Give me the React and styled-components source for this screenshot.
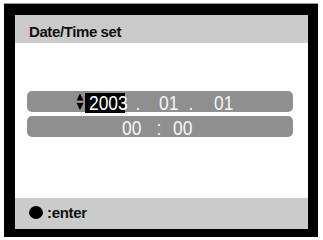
import React from "react";
import styled, { createGlobalStyle } from "styled-components";

const Global = createGlobalStyle`
  html, body { margin: 0; padding: 0; background: #ffffff; }
  body { font-family: "Liberation Sans", Arial, sans-serif; }
`;

const Page = styled.div`
  width: 323px;
  height: 240px;
  padding: 4px 0 0 4px;
  box-sizing: border-box;
`;

const Bezel = styled.div`
  width: 314px;
  height: 233px;
  box-sizing: border-box;
  background: #000;
  padding: 11px 10px 8px 11px;
  box-shadow: 0 -1px 0 #9a9a9a;
`;

const Screen = styled.div`
  width: 293px;
  height: 214px;
  background: #fff;
  display: flex;
  flex-direction: column;
`;

const Header = styled.div`
  height: 28px;
  box-sizing: border-box;
  background: #cbcbcb;
  padding: 9px 0 0 14px;
  font-weight: bold;
  font-size: 15px;
  line-height: 15px;
  letter-spacing: -0.4px;
  color: #111;
`;

const Body = styled.div`
  flex: 1;
  display: flex;
  flex-direction: column;
  gap: 4px;
  padding: 48px 15px 0 12px;
`;

const Row = styled.div`
  height: 21px;
  background: #8f8f8f;
  border-radius: 5px;
  display: flex;
  align-items: flex-start;
`;

const Field = styled.div`
  flex: none;
  width: ${(p) => p.$w}px;
  margin-left: ${(p) => p.$ml || 0}px;
  height: 21px;
  line-height: 24px;
  font-size: 21px;
  color: #f6f6f6;
  text-align: center;
  white-space: nowrap;
`;

const Selected = styled(Field)`
  background: #000;
  color: #fff;
  height: 20px;
  line-height: 20px;
  margin-top: 2px;
`;

const Glyphs = styled.span`
  display: inline-block;
  transform: scaleX(0.83);
  transform-origin: center;
`;

const Arrows = styled.svg`
  flex: none;
  margin-left: ${(p) => p.$ml}px;
  margin-top: 2px;
  display: block;
`;

const Footer = styled.div`
  height: 31px;
  box-sizing: border-box;
  background: #cbcbcb;
  display: flex;
  align-items: center;
  gap: 4px;
  padding: 0 0 3px 14px;
  font-weight: bold;
  font-size: 15px;
  line-height: 15px;
  letter-spacing: -0.3px;
  color: #111;
`;

const Dot = styled.span`
  width: 14px;
  height: 13px;
  border-radius: 50%;
  background: #000;
  display: inline-block;
`;

export default function App() {
  return (
    <>
      <Global />
      <Page>
        <Bezel>
          <Screen>
            <Header>Date/Time set</Header>
            <Body>
              <Row>
                <Arrows $ml={49} width="8" height="18" viewBox="0 0 8 18">
                  <polygon points="4,0.5 7.5,7.5 0.5,7.5" fill="#000" />
                  <polygon points="0.5,10 7.5,10 4,17" fill="#000" />
                </Arrows>
                <Selected $w={40} $ml={1}>
                  <Glyphs>2003</Glyphs>
                </Selected>
                <Field $w={10} $ml={8}>
                  <Glyphs>.</Glyphs>
                </Field>
                <Field $w={24} $ml={14}>
                  <Glyphs>01</Glyphs>
                </Field>
                <Field $w={10} $ml={5}>
                  <Glyphs>.</Glyphs>
                </Field>
                <Field $w={24} $ml={16}>
                  <Glyphs>01</Glyphs>
                </Field>
              </Row>
              <Row>
                <Field $w={24} $ml={93}>
                  <Glyphs>00</Glyphs>
                </Field>
                <Field $w={10} $ml={10}>
                  <Glyphs>:</Glyphs>
                </Field>
                <Field $w={24} $ml={7}>
                  <Glyphs>00</Glyphs>
                </Field>
              </Row>
            </Body>
            <Footer>
              <Dot />
              <span>:enter</span>
            </Footer>
          </Screen>
        </Bezel>
      </Page>
    </>
  );
}
